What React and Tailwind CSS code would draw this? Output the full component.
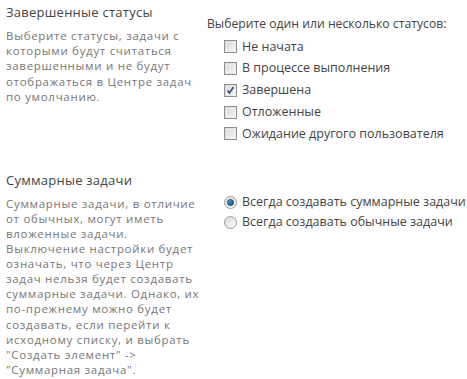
import React from 'react';

const Checkbox = ({ checked }) => (
  <span className="relative w-[13px] h-[13px] border border-[#8f8f8f] bg-gradient-to-br from-[#d6d6d6] to-[#f6f6f6] shrink-0">
    <span className="absolute inset-[1px] border border-[#f4f4f4]/60" />
    {checked && (
      <svg className="absolute left-[1px] top-[1px]" width="9" height="9" viewBox="0 0 9 9">
        <path d="M1.5 4.5 L3.5 7 L7.5 1" fill="none" stroke="#2c4a8a" strokeWidth="1.6" />
      </svg>
    )}
  </span>
);

const Radio = ({ checked }) => (
  <span className="relative w-[13px] h-[13px] rounded-full border border-[#9a9a9a] bg-gradient-to-br from-[#dcdcdc] to-[#fafafa] shrink-0 flex items-center justify-center">
    {checked && (
      <span className="w-[7px] h-[7px] rounded-full bg-gradient-to-br from-[#5ab0e6] to-[#0b4f8a] border border-[#1d3f68]" />
    )}
  </span>
);

const statuses = [
  { label: 'Не начата', checked: false },
  { label: 'В процессе выполнения', checked: false },
  { label: 'Завершена', checked: true },
  { label: 'Отложенные', checked: false },
  { label: 'Ожидание другого пользователя', checked: false },
];

export default function App() {
  return (
    <div className="w-[467px] h-[379px] bg-white pl-[6px] font-['Open_Sans','Noto_Sans',sans-serif] overflow-hidden">
      {/* Completed statuses */}
      <div className="flex">
        <div className="w-[201px] pt-[3px]">
          <h2 className="text-[13px] leading-[18px] tracking-[0.25px] text-[#444]">Завершенные статусы</h2>
          <p className="mt-[7px] text-[11.5px] leading-[15.2px] tracking-[0.7px] text-[#777] whitespace-nowrap">
            Выберите статусы, задачи с<br />
            которыми будут считаться<br />
            завершенными и не будут<br />
            отображаться в Центре задач<br />
            по умолчанию.
          </p>
        </div>
        <div className="pt-[15px]">
          <div className="text-[12.2px] leading-[18px] text-[#444] whitespace-nowrap">
            Выберите один или несколько статусов:
          </div>
          <div className="mt-[3px] pl-[17px]">
            {statuses.map((s) => (
              <label key={s.label} className="flex items-center gap-[5px] h-[21.75px] text-[12.5px] text-[#444] whitespace-nowrap">
                <Checkbox checked={s.checked} />
                {s.label}
              </label>
            ))}
          </div>
        </div>
      </div>

      {/* Summary tasks */}
      <div className="flex mt-[26px]">
        <div className="w-[201px]">
          <h2 className="text-[13px] leading-[18px] tracking-[0.25px] text-[#444]">Суммарные задачи</h2>
          <p className="mt-[7px] text-[11.5px] leading-[15.1px] tracking-[0.7px] text-[#777] whitespace-nowrap">
            Суммарные задачи, в отличие<br />
            от обычных, могут иметь<br />
            вложенные задачи.<br />
            Выключение настройки будет<br />
            означать, что через Центр<br />
            задач нельзя будет создавать<br />
            суммарные задачи. Однако, их<br />
            по-прежнему можно будет<br />
            создавать, если перейти к<br />
            исходному списку, и выбрать<br />
            "Создать элемент" -&gt;<br />
            "Суммарная задача".
          </p>
        </div>
        <div className="pt-[22px] pl-[17px]">
          <label className="flex items-center gap-[5px] h-[20px] text-[12.5px] text-[#444] whitespace-nowrap">
            <Radio checked />
            Всегда создавать суммарные задачи
          </label>
          <label className="flex items-center gap-[5px] h-[20px] text-[12.5px] text-[#444] whitespace-nowrap">
            <Radio />
            Всегда создавать обычные задачи
          </label>
        </div>
      </div>
    </div>
  );
}
